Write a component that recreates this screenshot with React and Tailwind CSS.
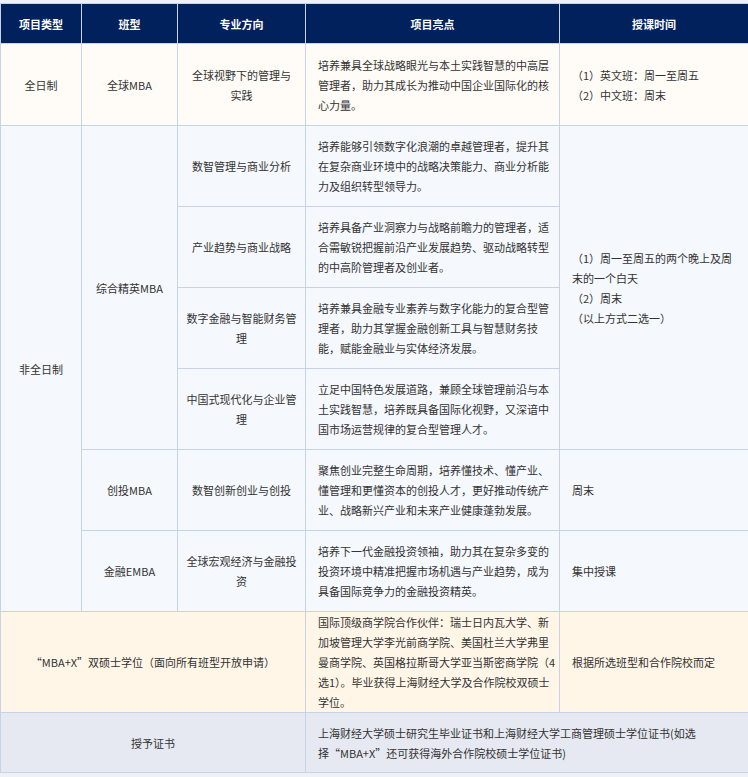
const B = 'border border-[#c9d3e8]'
const td = `${B} px-2 text-center align-middle`
const tl = `${B} pl-3 pr-0.5 text-left align-middle`

const mid = [
  ['数智管理与商业分析', '培养能够引领数字化浪潮的卓越管理者，提升其在复杂商业环境中的战略决策能力、商业分析能力及组织转型领导力。'],
  ['产业趋势与商业战略', '培养具备产业洞察力与战略前瞻力的管理者，适合需敏锐把握前沿产业发展趋势、驱动战略转型的中高阶管理者及创业者。'],
  ['数字金融与智能财务管理', '培养兼具金融专业素养与数字化能力的复合型管理者，助力其掌握金融创新工具与智慧财务技能，赋能金融业与实体经济发展。'],
  ['中国式现代化与企业管理', '立足中国特色发展道路，兼顾全球管理前沿与本土实践智慧，培养既具备国际化视野，又深谙中国市场运营规律的复合型管理人才。'],
]

export default function App() {
  return (
    <div className="w-[748px] h-[777px] bg-[#eef1f6] pt-[3px] text-[11px] leading-[20px] text-[#333]" style={{ fontFamily: '"Noto Sans CJK SC", "Noto Sans", sans-serif' }}>
      <table className="w-[748px] table-fixed border-collapse">
        <colgroup>
          <col className="w-[81px]" /><col className="w-[96px]" /><col className="w-[128px]" /><col className="w-[254px]" /><col className="w-[189px]" />
        </colgroup>
        <thead>
          <tr className="h-[40px] bg-[#00215c] text-white font-bold">
            {['项目类型', '班型', '专业方向', '项目亮点', '授课时间'].map((h) => (
              <th key={h} className="border border-[#c9d3e8] text-center">{h}</th>
            ))}
          </tr>
        </thead>
        <tbody>
          <tr className="h-[82px] bg-[#fffcf7]">
            <td className={td}>全日制</td>
            <td className={td}>全球MBA</td>
            <td className={`${td} px-3`}>全球视野下的管理与实践</td>
            <td className={tl}>培养兼具全球战略眼光与本土实践智慧的中高层管理者，助力其成长为推动中国企业国际化的核心力量。</td>
            <td className={tl}>（1）英文班：周一至周五<br />（2）中文班：周末</td>
          </tr>
          {mid.map(([d, t], i) => (
            <tr key={d} className="h-[81px] bg-[#f5f8fc]">
              {i === 0 && <td rowSpan={6} className={td}>非全日制</td>}
              {i === 0 && <td rowSpan={4} className={td}>综合精英MBA</td>}
              <td className={td}>{d}</td>
              <td className={tl}>{t}</td>
              {i === 0 && (
                <td rowSpan={4} className={`${B} pl-3 pr-2 text-left align-middle`}>
                  （1）周一至周五的两个晚上及周末的一个白天<br />（2）周末<br />（以上方式二选一）
                </td>
              )}
            </tr>
          ))}
          <tr className="h-[81px] bg-[#f5f8fc]">
            <td className={td}>创投MBA</td>
            <td className={td}>数智创新创业与创投</td>
            <td className={tl}>聚焦创业完整生命周期，培养懂技术、懂产业、懂管理和更懂资本的创投人才，更好推动传统产业、战略新兴产业和未来产业健康蓬勃发展。</td>
            <td className={tl}>周末</td>
          </tr>
          <tr className="h-[81px] bg-[#f5f8fc]">
            <td className={td}>金融EMBA</td>
            <td className={td}>全球宏观经济与金融投资</td>
            <td className={tl}>培养下一代金融投资领袖，助力其在复杂多变的投资环境中精准把握市场机遇与产业趋势，成为具备国际竞争力的金融投资精英。</td>
            <td className={tl}>集中授课</td>
          </tr>
          <tr className="h-[100px] bg-[#fff6e8]">
            <td colSpan={3} className={td}>“MBA+X”双硕士学位（面向所有班型开放申请）</td>
            <td className={tl}>国际顶级商学院合作伙伴：瑞士日内瓦大学、新加坡管理大学李光前商学院、美国杜兰大学弗里曼商学院、英国格拉斯哥大学亚当斯密商学院（4选1）。毕业获得上海财经大学及合作院校双硕士学位。</td>
            <td className={tl}>根据所选班型和合作院校而定</td>
          </tr>
          <tr className="h-[60px] bg-[#e6e9f1]">
            <td colSpan={3} className={td}>授予证书</td>
            <td colSpan={2} className={tl}>上海财经大学硕士研究生毕业证书和上海财经大学工商管理硕士学位证书(如选择“MBA+X”还可获得海外合作院校硕士学位证书)</td>
          </tr>
        </tbody>
      </table>
    </div>
  )
}
